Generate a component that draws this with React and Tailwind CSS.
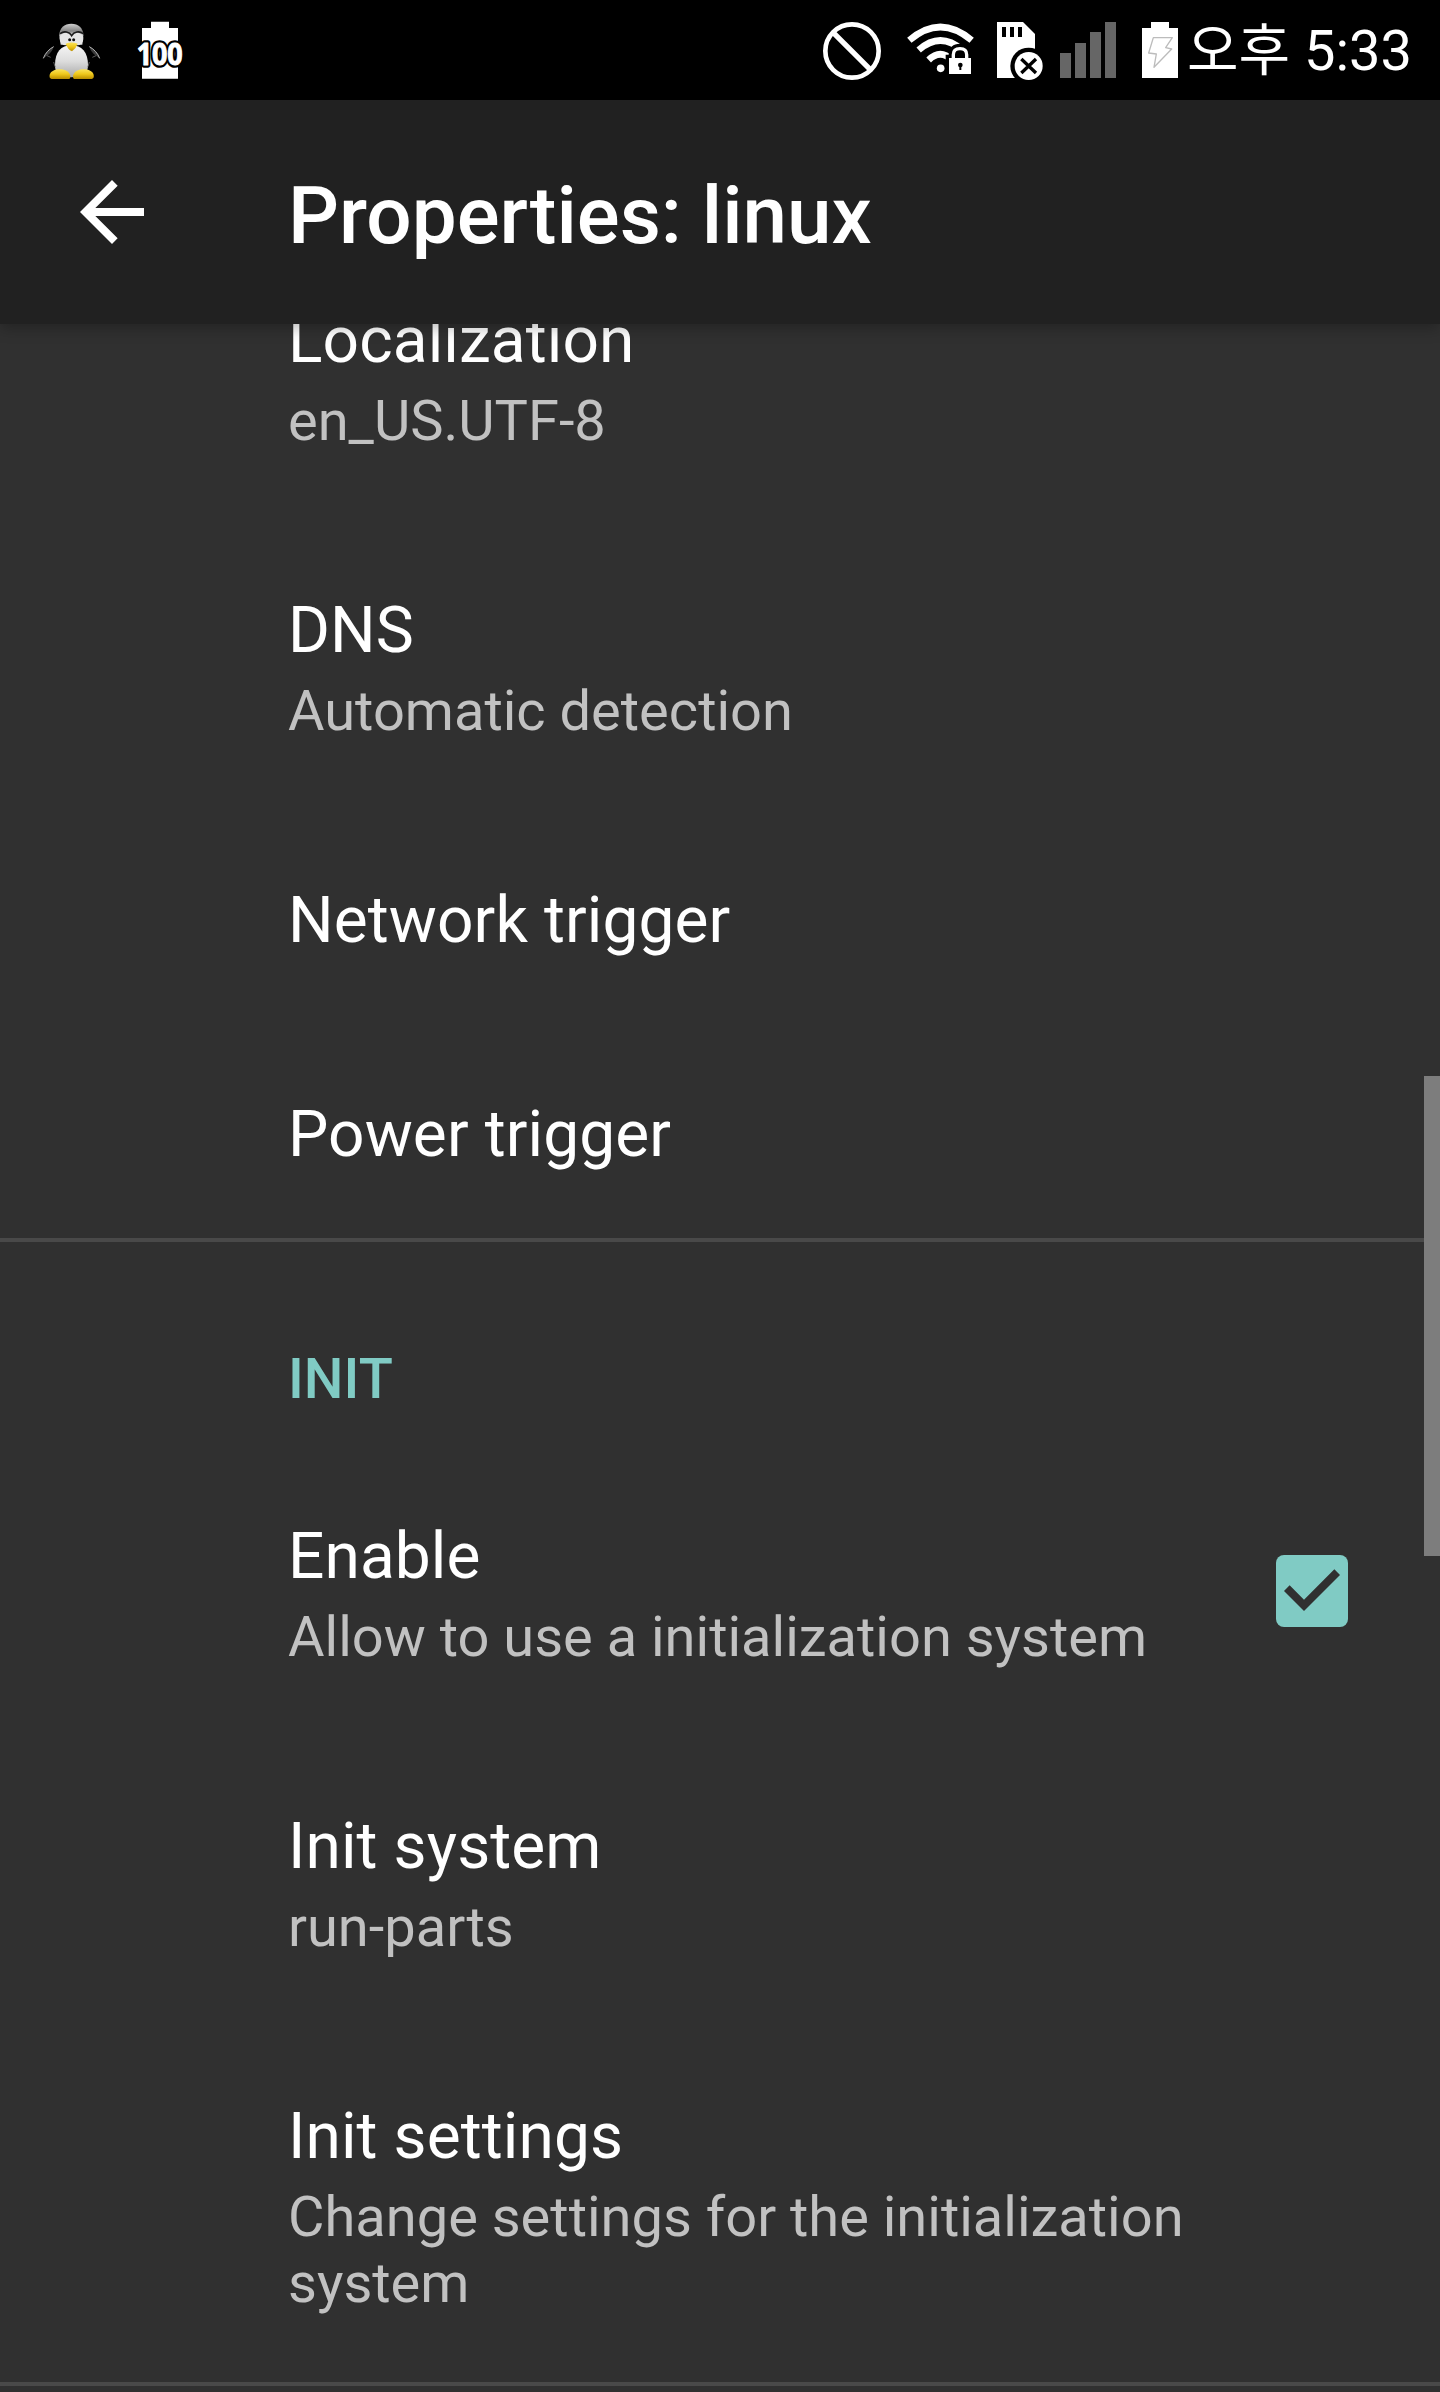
function Tux() {
  return (
    <svg className="ml-10 h-[60px] w-[64px]" viewBox="60 54 192 180">
      <defs>
        <linearGradient id="head" x1="0" y1="0" x2="0" y2="1">
          <stop offset="0" stopColor="#cfcfcf" />
          <stop offset="0.35" stopColor="#858585" />
          <stop offset="0.6" stopColor="#e0e0e0" />
          <stop offset="1" stopColor="#d8d8d8" />
        </linearGradient>
        <linearGradient id="belly" x1="0" y1="0" x2="0" y2="1">
          <stop offset="0" stopColor="#f4f4f4" />
          <stop offset="0.5" stopColor="#dcdcdc" />
          <stop offset="1" stopColor="#a9a9a9" />
        </linearGradient>
        <linearGradient id="foot" x1="0" y1="0" x2="0" y2="1">
          <stop offset="0" stopColor="#fbe35a" />
          <stop offset="0.5" stopColor="#eec71a" />
          <stop offset="1" stopColor="#b98d00" />
        </linearGradient>
      </defs>
      <path d="M118 100C118 78 133 65 154 65S190 78 190 100L187 128H122Z" fill="url(#head)" />
      <ellipse cx="137" cy="111" rx="18" ry="19" fill="#e6e6e6" />
      <ellipse cx="172" cy="111" rx="18" ry="19" fill="#e6e6e6" />
      <path d="M120 95C132 86 148 89 155 101C162 89 178 86 190 95" fill="none" stroke="#1c1c1c" strokeWidth="5" />
      <path d="M105 190C105 150 123 130 154 130S204 150 204 190C204 214 190 226 154 226S105 214 105 190Z" fill="url(#belly)" />
      <circle cx="149" cy="113" r="4.5" fill="#111" />
      <circle cx="161" cy="113" r="4.5" fill="#111" />
      <path d="M137 125Q154 118 173 125Q168 140 156 148Q143 142 137 125Z" fill="url(#foot)" />
      <path d="M101 133Q76 147 69 170Q76 164 81 161Q98 150 101 133Z M208 133Q233 147 240 170Q233 164 228 161Q211 150 208 133Z" fill="#3c3c3c" />
      <path d="M101 134Q79 146 70 169M208 134Q230 146 239 169" fill="none" stroke="#b4b4b4" strokeWidth="3" />
      <path d="M81 161L92 166M228 161L217 166M101 180L105 194M208 180L204 194" fill="none" stroke="#5c5c5c" strokeWidth="3" />
      <path d="M89 218C92 208 104 202 120 202S148 209 151 221Q152 231 145 231H95Q87 229 89 218Z" fill="url(#foot)" />
      <path d="M159 221C162 209 174 202 190 202S218 208 221 218Q223 229 215 231H165Q158 231 159 221Z" fill="url(#foot)" />
    </svg>
  );
}

function BatteryLevel() {
  return (
    <svg className="ml-[28px] h-[60px] w-[56px]" viewBox="336 60 168 180">
      <path d="M393 65H447V84H474V236H366V84H393Z" fill="#fff" />
      <g
        fontFamily="'Open Sans', sans-serif"
        fontWeight="700"
        fontSize="92"
        fill="#fff"
        strokeLinejoin="round"
      >
        <text x="350" y="194" textLength="138" lengthAdjust="spacingAndGlyphs" stroke="#000" strokeWidth="17">100</text>
        <text x="350" y="194" textLength="138" lengthAdjust="spacingAndGlyphs" stroke="#fff" strokeWidth="3">100</text>
      </g>
    </svg>
  );
}

function StatusBar() {
  return (
    <div className="flex h-[100px] items-start bg-black pt-5">
      <Tux />
      <BatteryLevel />
      <div className="flex-1" />
      {/* Blocked mode */}
      <svg className="h-[60px] w-[60px]" viewBox="66 60 180 180">
        <circle cx="156" cy="153" r="80" fill="none" stroke="#fff" strokeWidth="14" />
        <path d="M99 97L211 209" stroke="#fff" strokeWidth="16" />
      </svg>
      {/* Secured wi-fi */}
      <svg className="ml-6 h-[60px] w-[68px]" viewBox="318 60 204 180">
        <g fill="none" stroke="#fff" strokeWidth="20">
          <path d="M328 121Q421 41 515 121" />
          <path d="M356 150Q421 93 487 150" />
          <path d="M386 180Q421 146 456 180" />
        </g>
        <circle cx="422" cy="205" r="11.5" fill="#fff" />
        <path d="M437 240V164H446Q448 131 480 131T514 164H522V240Z" fill="#000" />
        <path d="M460 178V164Q460 146 480 146T500 164V178" fill="none" stroke="#fff" strokeWidth="10" />
        <path d="M447 174H513V222H447Z" fill="#fff" />
        <circle cx="481" cy="195" r="7" fill="#000" />
        <path d="M478 195H484V210H478Z" fill="#000" />
      </svg>
      {/* Memory card missing */}
      <svg className="ml-[22px] h-[60px] w-[48px]" viewBox="588 60 144 180">
        <path d="M591 66H669L705 102V234H591Z" fill="#fff" />
        <path d="M606 81H618V111H606ZM630 81H642V111H630ZM654 81H666V111H654Z" fill="#000" />
        <circle cx="686" cy="198" r="55" fill="#000" />
        <circle cx="686" cy="198" r="42" fill="#fff" />
        <path d="M664 177L708 219M708 177L664 219" stroke="#000" strokeWidth="10" />
      </svg>
      {/* Signal strength */}
      <svg className="ml-4 h-[60px] w-[56px]" viewBox="780 60 168 180">
        <path d="M780 159H813V234H780ZM825 129H858V234H825ZM870 96H903V234H870ZM915 66H948V234H915Z" fill="#666" />
      </svg>
      {/* Charging battery */}
      <svg className="ml-[26px] h-[60px] w-9" viewBox="96 60 108 180">
        <path d="M123 66H177V84H204V234H96V84H123Z" fill="#fff" />
        <path d="M130 113H187L167 143L185 147L132 202L139 162L116 159Z" fill="none" stroke="#bcbcbc" strokeWidth="4" strokeLinejoin="round" />
      </svg>
      <span className="ml-[9px] mr-[28px] whitespace-pre pt-px font-['Roboto','Noto_Sans_CJK_KR',sans-serif] text-[56px] leading-[60px] text-white">
        오후 5:33
      </span>
    </div>
  );
}

function Preference({ title, summary, checked }) {
  return (
    <div className="flex items-center pl-[288px] pr-20">
      <div className="flex-1 pb-[66px] pt-[73px]">
        <div className="text-[64px] leading-[75px] tracking-[0.1px] text-white">{title}</div>
        {summary && (
          <div className="mt-[10px] max-w-[920px] text-[56px] leading-[66px] text-[#c1c1c1]">{summary}</div>
        )}
      </div>
      {checked && (
        <svg className="h-24 w-24" viewBox="0 0 24 24">
          <rect x="3" y="3" width="18" height="18" rx="2" fill="#80cbc4" />
          <path d="M10 17l-5-5 1.41-1.41L10 14.17l7.59-7.59L19 8z" fill="#303030" />
        </svg>
      )}
    </div>
  );
}

export default function App() {
  return (
    <div className="relative flex h-[2392px] w-[1440px] flex-col overflow-hidden bg-[#303030] font-['Roboto',sans-serif]">
      <StatusBar />
      <header className="relative z-10 flex h-[224px] shrink-0 items-center bg-[#212121] pl-16 shadow-[0_4px_14px_rgba(0,0,0,0.28)]">
        <svg className="h-24 w-24" viewBox="0 0 24 24" fill="#fff">
          <path d="M20 11H7.83l5.59-5.59L12 4l-8 8 8 8 1.41-1.41L7.83 13H20v-2z" />
        </svg>
        <h1 className="ml-[128px] pt-[7px] text-[80px] font-medium leading-[94px] text-white">Properties: linux</h1>
      </header>
      <main className="-mt-[94px]">
        <Preference title="Localization" summary="en_US.UTF-8" />
        <Preference title="DNS" summary="Automatic detection" />
        <Preference title="Network trigger" />
        <Preference title="Power trigger" />
        <section className="border-t-4 border-[#494949]">
          <h2 className="h-[204px] pl-[288px] pt-[104px] text-[56px] font-medium leading-[66px] text-[#80cbc4]">INIT</h2>
          <Preference title="Enable" summary="Allow to use a initialization system" checked />
          <Preference title="Init system" summary="run-parts" />
          <Preference title="Init settings" summary="Change settings for the initialization system" />
        </section>
        <div className="h-1 bg-[#494949]" />
      </main>
      <div className="absolute right-0 top-[1076px] h-[480px] w-4 bg-[#7d7d7d]" />
    </div>
  );
}
